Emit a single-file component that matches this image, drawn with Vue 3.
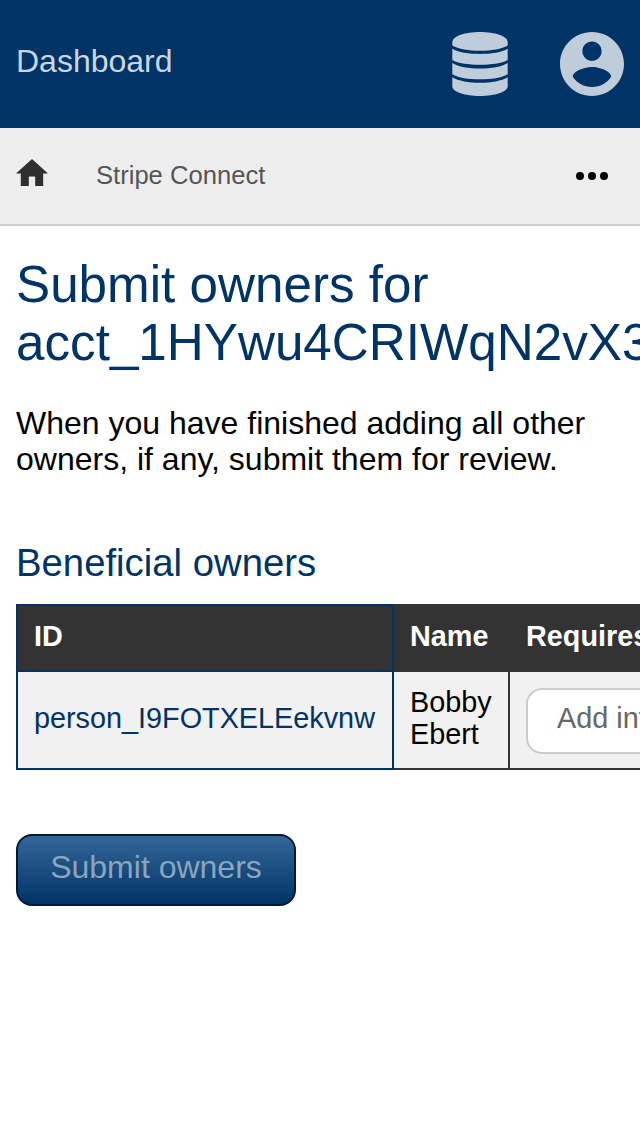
<script setup>
const owners = [{ id: 'person_I9FOTXELEekvnw', name: 'Bobby Ebert' }]
</script>

<template>
  <div class="page">
    <header class="topbar">
      <a class="brand">Dashboard</a>
      <nav class="menus">
        <svg class="db" viewBox="0 0 56 64" width="56" height="64">
          <path d="M.3 10.500C.3 4 13 0 28 0s27.700 4 27.700 10.500v3C50 17.100 39 18.800 28 18.800S6 17.100 .3 13.500z" />
          <path d="M.3 16.700C6 20.300 17 21.900 28 21.900s22-1.600 27.700-5.200v11.400C50 31.500 39 32.800 28 32.800S6 31.500 .3 28.100z" />
          <path d="M.3 31C6 34.800 17 36.500 28 36.500s22-1.700 27.700-5.500v11.200C50 45.900 39 47.300 28 47.300S6 45.900 .3 42.200z" />
          <path d="M.3 45.300C6 49 17 50.800 28 50.800s22-1.800 27.700-5.500v9C55.700 60 43 64 28 64S.3 60 .3 54.300z" />
        </svg>
        <svg viewBox="2 2 20 20" width="64" height="64">
          <path d="M12 2C6.480 2 2 6.480 2 12s4.480 10 10 10 10-4.480 10-10S17.520 2 12 2zm0 3c1.660 0 3 1.340 3 3s-1.340 3-3 3-3-1.340-3-3 1.340-3 3-3zm0 14.200c-2.500 0-4.710-1.280-6-3.220.03-1.990 4-3.080 6-3.080 1.990 0 5.970 1.090 6 3.080-1.290 1.940-3.500 3.220-6 3.220z" />
        </svg>
      </nav>
    </header>
    <nav class="crumbs">
      <svg class="home" viewBox="2 3 20 17" width="32" height="27.2">
        <path d="M10 20v-6h4v6h5v-8h3L12 3 2 12h3v8z" />
      </svg>
      <a class="crumb">Stripe Connect</a>
      <svg class="more" viewBox="0 0 32 8" width="32" height="8">
        <circle cx="4" cy="4" r="4" /><circle cx="16" cy="4" r="4" /><circle cx="28" cy="4" r="4" />
      </svg>
    </nav>
    <main class="content">
      <h1>Submit owners for acct_1HYwu4CRIWqN2vX3</h1>
      <p>When you have finished adding all other owners, if any, submit them for review.</p>
      <h2>Beneficial owners</h2>
      <div class="table">
        <div class="cell head id">ID</div>
        <div class="cell head">Name</div>
        <div class="cell head">Requires information</div>
        <template v-for="o in owners" :key="o.id">
          <div class="cell id">{{ o.id }}</div>
          <div class="cell name">{{ o.name }}</div>
          <div class="cell action"><a class="add">Add information</a></div>
        </template>
      </div>
      <button class="submit" disabled>Submit owners</button>
    </main>
  </div>
</template>

<style>
body { margin: 0; background: #fff; }
</style>

<style scoped>
.page {
  width: 100%;
  height: 1136px;
  overflow: hidden;
  font-family: "Liberation Sans", Arial, sans-serif;
  font-size: 32px;
  color: #000;
}
.topbar {
  box-sizing: border-box;
  height: 128px;
  padding: 0 16px;
  display: flex;
  align-items: center;
  justify-content: space-between;
  background: #003366;
}
.brand { color: #ccd6e0; line-height: 36px; padding-bottom: 6px; }
.menus { display: flex; gap: 52px; }
.menus svg { display: block; fill: #bfccd9; }
.crumbs {
  box-sizing: border-box;
  height: 98px;
  padding: 0 32px 0 16px;
  display: flex;
  align-items: center;
  background: #ededed;
  border-bottom: 2px solid #ccc;
}
.home { fill: #2f2f2f; margin-bottom: 7px; }
.crumb { margin-left: 48px; padding-bottom: 2px; font-size: 25.6px; line-height: 30px; color: #555; }
.more { margin-left: auto; }
.content { padding: 30px 16px 0; }
h1 {
  margin: 0;
  font-size: 51.2px;
  line-height: 58px;
  font-weight: 400;
  color: #003366;
}
p { margin: 33px 0 0; line-height: 36px; }
h2 {
  margin: 64px 0 0;
  font-size: 38.3px;
  line-height: 44px;
  font-weight: 400;
  color: #003366;
}
.table {
  width: 900px;
  margin-top: 19px;
  display: grid;
  grid-template-columns: 378px 116px 1fr;
  grid-template-rows: 68px 98px;
  font-size: 28.8px;
  line-height: 32px;
}
.cell {
  box-sizing: border-box;
  display: flex;
  align-items: center;
  padding: 0 16px 4px;
  background: #f1f1f1;
  border: solid #333;
  border-width: 0 2px 2px 0;
  white-space: nowrap;
}
.head { background: #333; color: #fff; font-weight: 700; padding-bottom: 2px; }
.name { white-space: normal; }
.id { border-color: #003366; border-left-width: 2px; }
.head.id { border-top-width: 2px; padding-bottom: 4px; }
.cell.id:not(.head) { color: #003366; }
.action { padding: 16px; align-items: flex-start; }
.add {
  box-sizing: border-box;
  height: 66px;
  padding: 0 29px;
  line-height: 57px;
  color: #666;
  background: #fff;
  border: 2px solid #ccc;
  border-radius: 16px;
}
.submit {
  box-sizing: border-box;
  display: block;
  width: 280px;
  height: 72px;
  margin-top: 64px;
  padding: 0 0 6px;
  font: 32px/36px "Liberation Sans", Arial, sans-serif;
  color: #8ca5bf;
  background: linear-gradient(#336699, #003366);
  border: 2px solid #001a33;
  border-radius: 16px;
}
</style>
